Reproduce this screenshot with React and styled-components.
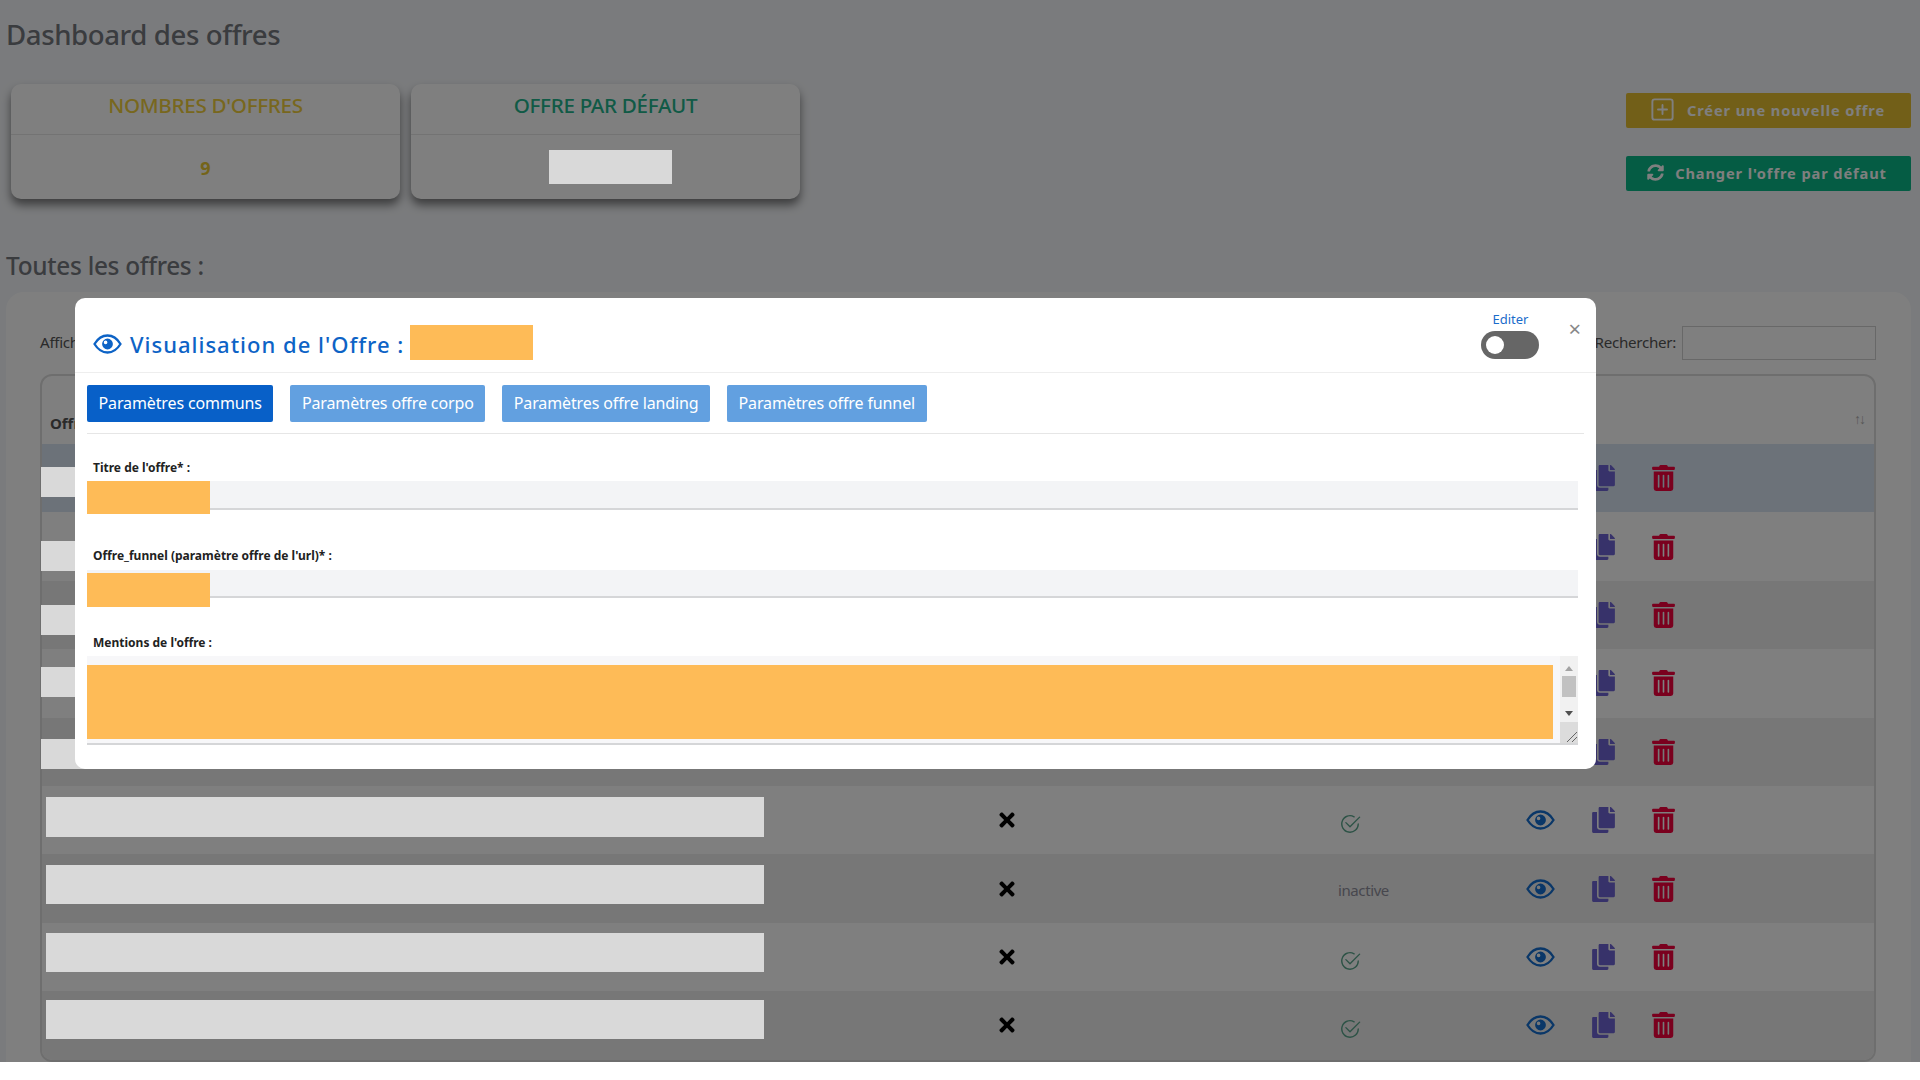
import React from "react";
import styled, { createGlobalStyle } from "styled-components";
import { FaCopy, FaTrashAlt, FaTimes, FaSyncAlt } from "react-icons/fa";
import { FiPlusSquare } from "react-icons/fi";
import { BsCheck2Circle } from "react-icons/bs";

const rows = [
  { top: 23, h: 30, inset: 0, status: "ok", selected: true },
  { top: 29, h: 30, inset: 0, status: "ok" },
  { top: 24, h: 30, inset: 0, status: "ok" },
  { top: 18, h: 30, inset: 0, status: "ok" },
  { top: 21, h: 30, inset: 0, status: "ok" },
  { top: 11, h: 40, inset: 5, status: "ok" },
  { top: 11, h: 39, inset: 5, status: "inactive" },
  { top: 10, h: 39, inset: 5, status: "ok" },
  { top: 9, h: 39, inset: 5, status: "ok" }
];

const Eye = ({ className }) => (
  <svg className={className} viewBox="0 0 29 20">
    <path
      d="M1.5 10C5 4.2 9.4 1.5 14.5 1.5S24 4.2 27.5 10C24 15.8 19.6 18.5 14.5 18.5S5 15.8 1.5 10Z"
      fill="none"
      stroke="currentColor"
      strokeWidth="2.3"
    />
    <path
      fillRule="evenodd"
      fill="currentColor"
      d="M14.5 4.6a5.4 5.4 0 1 1 0 10.8a5.4 5.4 0 0 1 0-10.8ZM12.6 6.6a1.8 1.8 0 1 0 0 3.6a1.8 1.8 0 0 0 0-3.6Z"
    />
  </svg>
);

const App = () => {
  return (
    <Page>
      <GlobalStyle />
      <Title>Dashboard des offres</Title>
      <StatsRow>
        <Cards>
          <Card>
            <CardHead $color="#f0cf3c">NOMBRES D'OFFRES</CardHead>
            <CardBody>
              <Count>9</Count>
            </CardBody>
          </Card>
          <Card>
            <CardHead $color="#22b58d">OFFRE PAR DÉFAUT</CardHead>
            <CardBody>
              <DefaultRedact />
            </CardBody>
          </Card>
        </Cards>
        <Actions>
          <ActionButton $color="#e5be30">
            <FiPlusSquare size={27} strokeWidth={1.7} />
            Créer une nouvelle offre
          </ActionButton>
          <ActionButton $color="#0bb888">
            <FaSyncAlt size={17} />
            Changer l'offre par défaut
          </ActionButton>
        </Actions>
      </StatsRow>
      <SubTitle>Toutes les offres :</SubTitle>
      <Panel>
        <PanelTop>
          <span>Afficher</span>
          <Search>
            Rechercher:
            <SearchBox />
          </Search>
        </PanelTop>
        <Table>
          <HeadRow>
            <HeadCell>Offre</HeadCell>
            <SortMark>↑↓</SortMark>
          </HeadRow>
          {rows.map((row, i) => (
            <Row key={i} $selected={row.selected} $odd={i % 2 === 1}>
              <Redact $top={row.top} $h={row.h} $inset={row.inset} />
              <CrossCell>
                <FaTimes size={22} />
              </CrossCell>
              {row.status === "ok" ? (
                <StatusCell>
                  <BsCheck2Circle size={22} />
                </StatusCell>
              ) : (
                <StatusText>inactive</StatusText>
              )}
              <RowActions>
                <EyeIcon />
                <CopyIcon />
                <TrashIcon />
              </RowActions>
            </Row>
          ))}
        </Table>
      </Panel>
      <Backdrop />
      <Modal>
        <ModalHead>
          <ModalTitle>
            <TitleEye />
            <span>Visualisation de l'Offre :</span>
            <TitleRedact />
          </ModalTitle>
          <EditBlock>
            <EditLabel>Editer</EditLabel>
            <Toggle>
              <Knob />
            </Toggle>
          </EditBlock>
          <Close>×</Close>
        </ModalHead>
        <ModalBody>
          <Tabs>
            <Tab $active>Paramètres communs</Tab>
            <Tab>Paramètres offre corpo</Tab>
            <Tab>Paramètres offre landing</Tab>
            <Tab>Paramètres offre funnel</Tab>
          </Tabs>
          <Field $gap={26}>
            <Label>Titre de l'offre* :</Label>
            <InputBox $h={29}>
              <Mask $top={0} $w={123} $h={33} />
            </InputBox>
          </Field>
          <Field $gap={38} $labelGap={6}>
            <Label>Offre_funnel (paramètre offre de l'url)* :</Label>
            <InputBox $h={28}>
              <Mask $top={3} $w={123} $h={34} />
            </InputBox>
          </Field>
          <Field $gap={37}>
            <Label>Mentions de l'offre :</Label>
            <TextBox>
              <Mask $top={9} $w={1466} $h={74} />
              <Scroll>
                <ArrowUp />
                <Thumb />
                <ArrowDown />
                <Resize>
                  <svg width="14" height="14" viewBox="0 0 14 14">
                    <path d="M3 13 13 3M8 13l5-5" stroke="#666" strokeWidth="1" fill="none" />
                  </svg>
                </Resize>
              </Scroll>
            </TextBox>
          </Field>
        </ModalBody>
      </Modal>
    </Page>
  );
};

const GlobalStyle = createGlobalStyle`
  html, body {
    margin: 0;
    background: #fff;
    font-family: "Noto Sans", "Liberation Sans", sans-serif;
  }
  * { box-sizing: border-box; }
`;

const Page = styled.div`
  position: relative;
  height: 1062px;
  overflow: hidden;
  padding: 0 9px 0 6px;
  background: #f5f7fa;
  color: #74787e;
`;

const Backdrop = styled.div`
  position: absolute;
  inset: 0;
  z-index: 10;
  background: rgba(0, 0, 0, 0.5);
`;

const Title = styled.h1`
  margin: 0;
  padding-top: 16px;
  height: 84px;
  font-size: 27.6px;
  line-height: 36px;
  font-weight: 500;
  letter-spacing: -0.4px;
`;

const StatsRow = styled.div`
  display: flex;
  justify-content: space-between;
  padding-left: 5px;
`;

const Cards = styled.div`
  display: flex;
  gap: 11px;
`;

const Card = styled.div`
  width: 389px;
  height: 115px;
  background: #fff;
  border-radius: 10px;
  box-shadow: 0 6px 10px rgba(0, 0, 0, 0.5);
`;

const CardHead = styled.div`
  height: 51px;
  line-height: 42px;
  text-align: center;
  font-size: 20.6px;
  font-weight: 500;
  letter-spacing: -0.3px;
  color: ${p => p.$color};
  border-bottom: 1px solid #e6e6e6;
`;

const CardBody = styled.div`
  height: 64px;
  padding-top: 2px;
  display: flex;
  align-items: center;
  justify-content: center;
`;

const Count = styled.span`
  font-size: 18px;
  font-weight: 700;
  color: #e8c832;
`;

const DefaultRedact = styled.div`
  position: relative;
  z-index: 11;
  width: 123px;
  height: 34px;
  margin: -2px 0 0 10px;
  background: #d9d9d9;
`;

const Actions = styled.div`
  display: flex;
  flex-direction: column;
  gap: 28px;
  padding-top: 9px;
`;

const ActionButton = styled.button`
  width: 285px;
  height: 35px;
  padding: 0 3px 2px 0;
  display: flex;
  align-items: center;
  justify-content: center;
  gap: 11px;
  border: 0;
  border-radius: 2px;
  font-family: inherit;
  font-size: 14.6px;
  font-weight: 700;
  letter-spacing: 0.9px;
  color: #fff;
  background: ${p => p.$color};
`;

const SubTitle = styled.h2`
  margin: 0;
  padding-top: 51px;
  height: 93px;
  font-size: 24.4px;
  line-height: 32px;
  font-weight: 500;
  letter-spacing: -0.3px;
`;

const Panel = styled.div`
  height: 800px;
  padding: 34px 35px 0 34px;
  background: #fff;
  border-radius: 18px;
`;

const PanelTop = styled.div`
  height: 48px;
  display: flex;
  justify-content: space-between;
  align-items: flex-start;
  font-size: 15.2px;
  line-height: 32px;
  letter-spacing: -0.3px;
  color: #555;
`;

const Search = styled.label`
  display: flex;
  gap: 6px;
`;

const SearchBox = styled.div`
  width: 194px;
  height: 34px;
  border: 1px solid #d0d0d0;
`;

const Table = styled.div`
  border: 2px solid #ddd;
  border-radius: 12px;
`;

const HeadRow = styled.div`
  height: 68px;
  display: flex;
  justify-content: space-between;
  align-items: flex-end;
  padding: 0 8px 11px 8px;
`;

const HeadCell = styled.span`
  font-size: 15px;
  font-weight: 700;
  color: #555;
`;

const SortMark = styled.span`
  font-size: 14px;
  letter-spacing: -2px;
  color: #b0b0b0;
  padding: 0 2px 5px 0;
`;

const Row = styled.div`
  height: 68.4px;
  display: grid;
  grid-template-columns: 956px 340px 188px 1fr;
  align-items: center;
  background: ${p => (p.$selected ? "#d8e4f2" : p.$odd ? "#fff" : "#eee")};
  &:last-child {
    border-radius: 0 0 10px 10px;
  }
`;

const Redact = styled.div`
  position: relative;
  z-index: 11;
  align-self: start;
  width: ${p => 723 - p.$inset}px;
  height: ${p => p.$h}px;
  margin: ${p => p.$top}px 0 0 ${p => p.$inset - 1}px;
  background: #d9d9d9;
`;

const CrossCell = styled.div`
  display: flex;
  margin-left: -2px;
  color: #000;
`;

const StatusCell = styled.div`
  display: flex;
  padding-top: 8px;
  margin-left: 1px;
  color: #5aa58c;
`;

const StatusText = styled.div`
  padding-top: 3px;
  font-size: 15px;
  letter-spacing: -0.4px;
  color: #8e8e9c;
`;

const RowActions = styled.div`
  display: flex;
  align-items: center;
  gap: 37px;
`;

const EyeIcon = styled(Eye)`
  width: 29px;
  height: 20px;
  color: #146ed0;
`;

const TitleEye = styled(Eye)`
  width: 29px;
  height: 20px;
  margin-right: 2px;
`;

const CopyIcon = styled(FaCopy)`
  width: 23px;
  height: 26px;
  color: #6e64d4;
`;

const TrashIcon = styled(FaTrashAlt)`
  width: 23px;
  height: 26px;
  color: #f4003c;
`;

const Modal = styled.div`
  position: absolute;
  z-index: 20;
  top: 298px;
  left: 75px;
  width: 1521px;
  height: 471px;
  background: #fff;
  border-radius: 10px;
`;

const ModalHead = styled.div`
  height: 75px;
  display: flex;
  align-items: center;
  padding: 0 15px 0 18px;
  border-bottom: 1px solid #eeeeee;
`;

const ModalTitle = styled.div`
  flex: 1;
  display: flex;
  align-items: center;
  gap: 6px;
  padding-top: 18px;
  font-size: 22px;
  font-weight: 500;
  letter-spacing: 1px;
  color: #0d63c6;
`;

const TitleRedact = styled.div`
  width: 123px;
  height: 35px;
  margin-top: -4px;
  background: #febb57;
`;

const EditBlock = styled.div`
  display: flex;
  flex-direction: column;
  align-items: center;
  gap: 3px;
  margin-top: -1px;
`;

const EditLabel = styled.span`
  font-size: 13px;
  line-height: 18px;
  color: #1a6ccb;
`;

const Toggle = styled.div`
  width: 58px;
  height: 28px;
  padding: 5px;
  border-radius: 14px;
  background: #666;
`;

const Knob = styled.div`
  width: 18px;
  height: 18px;
  border-radius: 50%;
  background: #fff;
`;

const Close = styled.span`
  margin: -14px 0 0 29px;
  font-size: 22px;
  line-height: 22px;
  color: #888;
`;

const ModalBody = styled.div`
  padding: 11.5px 12px 0 12px;
`;

const Tabs = styled.div`
  display: flex;
  gap: 17px;
  height: 49px;
  padding-bottom: 11px;
  border-bottom: 1px solid #e6e6e6;
`;

const Tab = styled.div`
  height: 37px;
  padding: 0 11.5px;
  line-height: 37px;
  border-radius: 2px;
  font-size: 16px;
  letter-spacing: -0.12px;
  color: #fff;
  background: ${p => (p.$active ? "#0860c8" : "#62a0e0")};
`;

const Field = styled.div`
  margin-top: ${p => p.$gap}px;
  padding-right: 6px;
  & > div:first-child {
    margin-bottom: ${p => p.$labelGap || 5}px;
  }
`;

const Label = styled.div`
  padding-left: 6px;
  font-size: 12px;
  line-height: 16px;
  font-weight: 700;
  color: #222;
`;

const InputBox = styled.div`
  position: relative;
  height: ${p => p.$h}px;
  background: #f3f4f6;
  border-bottom: 2px solid #d5d6d8;
`;

const TextBox = styled.div`
  position: relative;
  height: 89px;
  display: flex;
  justify-content: flex-end;
  background: #f7f7f9;
  border-bottom: 2px solid #d5d6d8;
`;

const Mask = styled.div`
  position: absolute;
  left: 0;
  top: ${p => p.$top}px;
  width: ${p => p.$w}px;
  height: ${p => p.$h}px;
  background: #febb57;
`;

const Scroll = styled.div`
  width: 18px;
  display: flex;
  flex-direction: column;
  align-items: center;
  padding-top: 10px;
  background: #f1f1f1;
`;

const ArrowUp = styled.div`
  border: 4px solid transparent;
  border-top: 0;
  border-bottom: 5px solid #a3a3a3;
`;

const Thumb = styled.div`
  width: 14px;
  height: 21px;
  margin: 5px 0 14px;
  background: #c1c1c1;
`;

const ArrowDown = styled.div`
  border: 4px solid transparent;
  border-bottom: 0;
  border-top: 5px solid #505050;
`;

const Resize = styled.div`
  width: 18px;
  height: 21px;
  margin-top: auto;
  display: flex;
  align-items: flex-end;
  justify-content: flex-end;
  background: #dcdcdc;
`;

export default App;
